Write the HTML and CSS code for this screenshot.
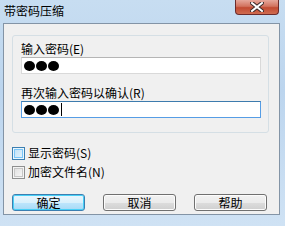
FILE: index.html
```html
<!DOCTYPE html>
<html lang="zh-CN">
<head>
    <meta charset="UTF-8">
    <title>带密码压缩</title>
    <link rel="stylesheet" href="styles.css">
</head>
<body>
    <div class="window">
        <div class="titlebar">
            <span class="title">带密码压缩</span>
            <span class="close">
                <svg width="14" height="10" viewBox="0 0 14 10">
                    <path d="M2 1 L12 9 M12 1 L2 9" stroke="#3a2a2a" stroke-width="4" stroke-linecap="square"/>
                    <path d="M2 1 L12 9 M12 1 L2 9" stroke="#ffffff" stroke-width="2" stroke-linecap="square"/>
                </svg>
            </span>
        </div>
        <div class="client">
            <div class="group">
                <label class="label">输入密码(E)</label>
                <div class="field">
                    <span class="dot"></span><span class="dot"></span><span class="dot"></span>
                </div>
                <label class="label">再次输入密码以确认(R)</label>
                <div class="field focused">
                    <span class="dot"></span><span class="dot"></span><span class="dot"></span><span class="caret"></span>
                </div>
            </div>
            <div class="checks">
                <label class="check"><span class="box hot"></span>显示密码(S)</label>
                <label class="check"><span class="box"></span>加密文件名(N)</label>
            </div>
            <div class="buttons">
                <button class="btn default">确定</button>
                <button class="btn">取消</button>
                <button class="btn">帮助</button>
            </div>
        </div>
    </div>
</body>
</html>
```

FILE: styles.css
```css
body {
    margin: 0;
    font-family: "Noto Sans CJK SC", "Noto Sans", sans-serif;
    font-size: 12px;
    color: #000;
}
.window {
    width: 285px;
    height: 226px;
    box-sizing: border-box;
    padding: 0 5px 11px 3px;
    background: linear-gradient(180deg, #c7ddf1 0%, #bcd5ee 40%, #cfe2f4 100%);
    display: flex;
    flex-direction: column;
}
.titlebar {
    height: 23px;
    display: flex;
    justify-content: space-between;
    align-items: flex-start;
}
.title {
    font-size: 12px;
    line-height: 14px;
    margin-top: 4px;
    margin-left: 1px;
}
.close {
    width: 44px;
    height: 15px;
    margin-right: 1px;
    box-sizing: border-box;
    border: 1px solid #6c2b2b;
    border-top: none;
    border-radius: 0 0 4px 4px;
    background: linear-gradient(180deg, #e6a79b 0%, #d2735f 45%, #c24a32 55%, #cf6c50 100%);
    display: flex;
    justify-content: center;
    align-items: center;
}
.client {
    flex: 1;
    background: #f0f0f0;
    border: 1px solid #8394a6;
    padding: 11px 0 0 8px;
    display: flex;
    flex-direction: column;
}
.group {
    width: 257px;
    height: 98px;
    box-sizing: border-box;
    border: 1px solid #d5dfe5;
    border-radius: 3px;
    padding: 6px 0 0 8px;
    display: flex;
    flex-direction: column;
}
.label {
    line-height: 14px;
    height: 15px;
}
.field {
    width: 240px;
    height: 17px;
    box-sizing: border-box;
    border: 1px solid #d9d9d9;
    border-top-color: #b5b5b5;
    background: #fff;
    display: flex;
    align-items: center;
    padding-left: 2px;
    gap: 1px;
    margin-bottom: 12px;
}
.field.focused {
    border-color: #569de5;
    border-top-color: #3d7bad;
    margin-bottom: 0;
}
.dot {
    width: 11px;
    height: 10px;
    border-radius: 50%;
    background: #000;
}
.caret {
    width: 1px;
    height: 13px;
    background: #000;
    margin-left: 1px;
}
.checks {
    margin-top: 13px;
    display: flex;
    flex-direction: column;
    gap: 5px;
}
.check {
    display: flex;
    align-items: center;
    gap: 3px;
    height: 14px;
    line-height: 14px;
}
.box {
    width: 13px;
    height: 13px;
    box-sizing: border-box;
    border: 1px solid #8e8f8f;
    background: linear-gradient(135deg, #dcdcdc, #fbfbfb);
    box-shadow: inset 0 0 0 1px #f4f4f4, inset 0 0 0 2px #c6c6c6;
}
.box.hot {
    border-color: #3c7fb1;
    background: linear-gradient(135deg, #b9def6, #eaf6fd);
    box-shadow: inset 0 0 0 1px #eaf6fd, inset 0 0 0 2px #79c6f9;
}
.buttons {
    margin-top: 15px;
    display: flex;
    gap: 18px;
}
.btn {
    width: 73px;
    height: 17px;
    padding: 0;
    font-family: inherit;
    font-size: 12px;
    line-height: 14px;
    border: 1px solid #707070;
    border-radius: 3px;
    background: linear-gradient(180deg, #f2f2f2 0%, #ebebeb 50%, #dddddd 51%, #cfcfcf 100%);
    box-shadow: inset 0 0 0 1px #fcfcfc;
}
.btn.default {
    border-color: #3c7fb1;
    background: linear-gradient(180deg, #eaf6fd 0%, #d9f0fc 50%, #bee6fd 51%, #a7d9f5 100%);
    box-shadow: inset 0 0 0 1px #48d0f7;
}
```
